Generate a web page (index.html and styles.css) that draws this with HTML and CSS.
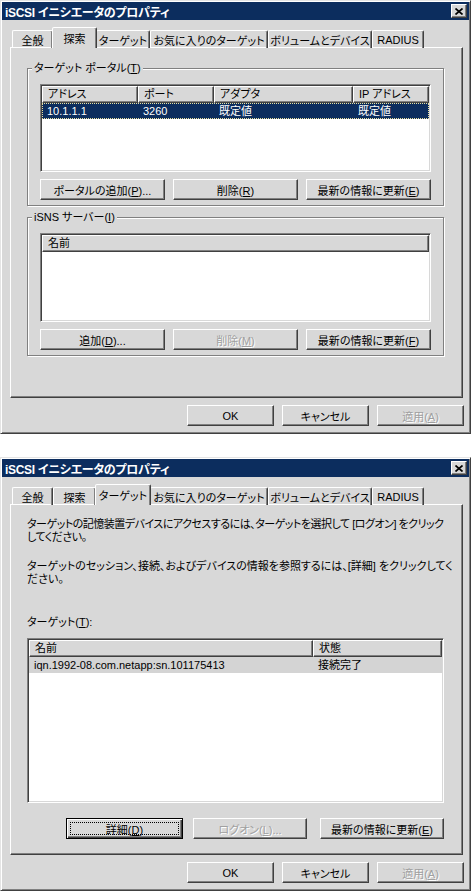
FILE: index.html
```html
<!DOCTYPE html>
<html lang="ja">
<head>
    <meta charset="UTF-8">
    <meta name="viewport" content="width=device-width, initial-scale=1.0">
    <title>iSCSI イニシエータのプロパティ</title>
    <link rel="stylesheet" href="styles.css">
</head>
<body>
    <!-- 探索 tab -->
    <div class="window">
        <div class="titlebar">
            <span class="title">iSCSI イニシエータのプロパティ</span>
            <span class="close"><svg width="8" height="7" viewBox="0 0 8 7"><path d="M0.5 0.5L7.5 6.5M7.5 0.5L0.5 6.5" stroke="#000" stroke-width="1.7"/></svg></span>
        </div>
        <div class="tabs">
            <div class="tab tab-general">全般</div>
            <div class="tab tab-search active">探索</div>
            <div class="tab tab-target">ターゲット</div>
            <div class="tab tab-fav">お気に入りのターゲット</div>
            <div class="tab tab-vol">ボリュームとデバイス</div>
            <div class="tab tab-radius">RADIUS</div>
        </div>
        <div class="panel panel-search">
            <div class="group">
                <div class="group-label">ターゲット ポータル(<u>T</u>)</div>
                <div class="list list-portals">
                    <div class="list-head">
                        <div class="col c-addr">アドレス</div>
                        <div class="col c-port">ポート</div>
                        <div class="col c-adapter">アダプタ</div>
                        <div class="col c-rest">IP アドレス</div>
                    </div>
                    <div class="row selected">
                        <span class="cell c-addr">10.1.1.1</span>
                        <span class="cell c-port">3260</span>
                        <span class="cell c-adapter">既定値</span>
                        <span class="cell c-rest">既定値</span>
                    </div>
                </div>
                <div class="btn-row">
                    <button class="btn">ポータルの追加(<u>P</u>)...</button>
                    <button class="btn">削除(<u>R</u>)</button>
                    <button class="btn">最新の情報に更新(<u>E</u>)</button>
                </div>
            </div>
            <div class="group">
                <div class="group-label">iSNS サーバー(<u>I</u>)</div>
                <div class="list list-isns">
                    <div class="list-head">
                        <div class="col c-rest">名前</div>
                    </div>
                </div>
                <div class="btn-row">
                    <button class="btn">追加(<u>D</u>)...</button>
                    <button class="btn" disabled>削除(<u>M</u>)</button>
                    <button class="btn">最新の情報に更新(<u>F</u>)</button>
                </div>
            </div>
        </div>
        <div class="footer">
            <button class="btn">OK</button>
            <button class="btn">キャンセル</button>
            <button class="btn" disabled>適用(<u>A</u>)</button>
        </div>
    </div>

    <!-- ターゲット tab -->
    <div class="window">
        <div class="titlebar">
            <span class="title">iSCSI イニシエータのプロパティ</span>
            <span class="close"><svg width="8" height="7" viewBox="0 0 8 7"><path d="M0.5 0.5L7.5 6.5M7.5 0.5L0.5 6.5" stroke="#000" stroke-width="1.7"/></svg></span>
        </div>
        <div class="tabs">
            <div class="tab tab-general">全般</div>
            <div class="tab tab-search">探索</div>
            <div class="tab tab-target active">ターゲット</div>
            <div class="tab tab-fav">お気に入りのターゲット</div>
            <div class="tab tab-vol">ボリュームとデバイス</div>
            <div class="tab tab-radius">RADIUS</div>
        </div>
        <div class="panel panel-targets">
            <p class="desc tight">ターゲットの記憶装置デバイスにアクセスするには、ターゲットを選択して [ログオン] をクリック<br>してください。</p>
            <p class="desc">ターゲットのセッション、接続、およびデバイスの情報を参照するには、[詳細] をクリックしてく<br>ださい。</p>
            <div class="field-label">ターゲット(<u>T</u>):</div>
            <div class="list list-targets">
                <div class="list-head">
                    <div class="col c-name">名前</div>
                    <div class="col c-rest">状態</div>
                </div>
                <div class="row dim">
                    <span class="cell c-name">iqn.1992-08.com.netapp:sn.101175413</span>
                    <span class="cell c-rest">接続完了</span>
                </div>
            </div>
            <div class="btn-row btn-row-targets">
                <button class="btn focus btn-details">詳細(<u>D</u>)</button>
                <button class="btn btn-logon" disabled>ログオン(<u>L</u>)...</button>
                <button class="btn btn-refresh">最新の情報に更新(<u>E</u>)</button>
            </div>
        </div>
        <div class="footer">
            <button class="btn">OK</button>
            <button class="btn">キャンセル</button>
            <button class="btn" disabled>適用(<u>A</u>)</button>
        </div>
    </div>
</body>
</html>
```

FILE: styles.css
```css
body {
    margin: 0;
    background: #fff;
    font-family: "Liberation Sans", "Noto Sans CJK JP", sans-serif;
    font-size: 11px;
    font-feature-settings: "palt";
    color: #000;
}
u {
    text-decoration: underline;
    text-underline-offset: 1px;
}
.window {
    width: 471px;
    height: 434px;
    box-sizing: border-box;
    padding: 1px;
    background: #d8d8d8;
    border: 1px solid;
    border-color: #e4e4e4 #404040 #404040 #e4e4e4;
    box-shadow: inset 1px 1px #fff, inset -1px -1px #808080;
}
.window + .window {
    margin-top: 23px;
}
.titlebar {
    height: 18px;
    background: #0c2d5e;
    color: #fff;
    display: flex;
    align-items: center;
    justify-content: space-between;
    padding: 0 2px 0 3px;
}
.title {
    font-weight: bold;
    font-size: 12px;
    letter-spacing: -0.3px;
    white-space: nowrap;
}
.close {
    width: 16px;
    height: 14px;
    box-sizing: border-box;
    background: #d8d8d8;
    border: 1px solid;
    border-color: #fff #404040 #404040 #fff;
    box-shadow: inset -1px -1px #808080;
    display: flex;
    align-items: center;
    justify-content: center;
}
.tabs {
    display: flex;
    align-items: flex-end;
    height: 21px;
    margin-top: 7px;
    padding-left: 10px;
}
.tab {
    height: 17px;
    border: 1px solid;
    border-bottom: none;
    border-color: #fff #404040 transparent #fff;
    box-shadow: inset -1px 0 #808080;
    display: flex;
    align-items: center;
    justify-content: center;
    white-space: nowrap;
    border-radius: 2px 2px 0 0;
}
.tab.active {
    height: 20px;
    padding: 0 1px;
    margin: 0 -1px;
    position: relative;
    z-index: 1;
    background: #d8d8d8;
}
.tab-general { width: 39px; }
.tab-search { width: 41px; }
.tab-target { width: 52px; }
.tab-fav { width: 116px; }
.tab-vol { width: 102px; }
.tab-radius { width: 50px; }
.panel {
    margin-top: -1px;
    margin-left: 8px;
    width: 453px;
    height: 351px;
    box-sizing: border-box;
    border: 1px solid;
    border-color: #fff #404040 #404040 #fff;
    box-shadow: inset -1px -1px #808080;
}
.panel-search {
    padding: 20px 0 0 16px;
}
.panel-targets {
    padding: 13px 0 0 16px;
}
.group {
    width: 417px;
    box-sizing: border-box;
    border: 1px solid #808080;
    box-shadow: inset 1px 1px #fff, 1px 1px #fff;
    padding: 0 12px 5px;
}
.group + .group {
    margin-top: 11px;
}
.group-label {
    width: fit-content;
    margin: -7px 0 0 -8px;
    padding: 0 2px;
    background: #d8d8d8;
    line-height: 13px;
    white-space: nowrap;
}
.list {
    margin-top: 9px;
    background: #fff;
    box-sizing: border-box;
    border: 1px solid;
    border-color: #808080 #fff #fff #808080;
    box-shadow: inset 1px 1px #404040, inset -1px -1px #d8d8d8;
    padding: 1px;
    overflow: hidden;
}
.list-portals { height: 88px; }
.list-isns { height: 89px; }
.list-targets {
    width: 417px;
    height: 165px;
}
.list-head {
    display: flex;
    height: 17px;
}
.col {
    box-sizing: border-box;
    height: 17px;
    border: 1px solid;
    border-color: #fff #404040 #404040 #fff;
    box-shadow: inset -1px -1px #808080;
    background: #d8d8d8;
    padding-left: 5px;
    line-height: 15px;
    white-space: nowrap;
    overflow: hidden;
}
.row {
    display: flex;
    height: 16px;
    line-height: 16px;
}
.cell {
    box-sizing: border-box;
    padding-left: 5px;
    white-space: nowrap;
}
.c-addr { width: 96px; }
.c-port { width: 76px; }
.c-adapter { width: 139px; }
.c-name { width: 284px; }
.c-rest { flex: 1; }
.row.selected {
    background: #0c2d5e;
    color: #fff;
    outline: 1px dotted #e8e0a0;
    outline-offset: -1px;
}
.row.dim {
    background: #d4d4d4;
}
.btn {
    height: 21px;
    box-sizing: border-box;
    background: #d8d8d8;
    border: 1px solid;
    border-color: #fff #404040 #404040 #fff;
    box-shadow: inset -1px -1px #808080;
    font: inherit;
    color: #000;
    padding: 0;
    white-space: nowrap;
}
.btn:disabled {
    color: #a0a0a0;
    text-shadow: 1px 1px #fff;
}
.btn.focus {
    border-color: #000;
    box-shadow: inset 1px 1px #fff, inset -1px -1px #404040, inset -2px -2px #808080;
    outline: 1px dotted #000;
    outline-offset: -5px;
}
.btn-row {
    display: flex;
    gap: 8px;
    margin-top: 7px;
}
.btn-row .btn {
    width: 125px;
}
.btn-row-targets {
    width: 417px;
    justify-content: flex-end;
    gap: 0;
    margin-top: 15px;
}
.btn-row .btn-details { width: 117px; }
.btn-row .btn-logon { width: 114px; margin-left: 10px; }
.btn-row .btn-refresh { width: 124px; margin-left: 13px; }
.desc {
    margin: 0;
    line-height: 13px;
    white-space: nowrap;
}
.desc.tight {
    letter-spacing: -0.5px;
}
.desc + .desc {
    margin-top: 16px;
}
.field-label {
    margin-top: 30px;
    line-height: 13px;
}
.footer {
    display: flex;
    justify-content: flex-end;
    gap: 8px;
    margin-top: 7px;
    padding-right: 5px;
}
.footer .btn {
    width: 87px;
}
```
